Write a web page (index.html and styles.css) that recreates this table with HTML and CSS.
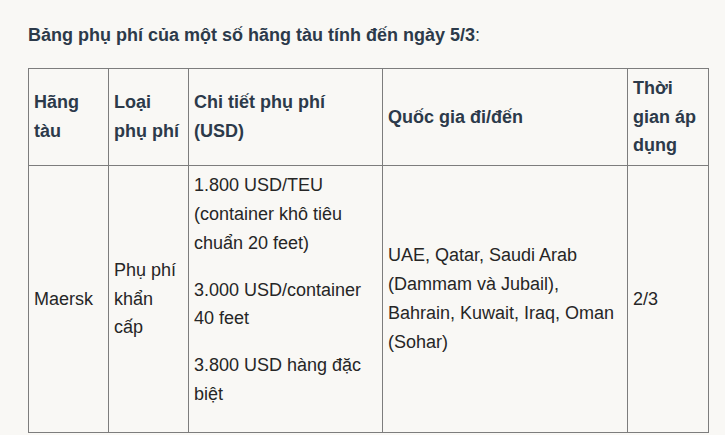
FILE: index.html
```html
<!DOCTYPE html>
<html lang="vi">
<head>
<meta charset="utf-8">
<link rel="stylesheet" href="styles.css">
</head>
<body>
<div class="article">
  <p class="caption"><strong>Bảng phụ phí của một số hãng tàu tính đến ngày 5/3</strong>:</p>
  <table class="fees">
    <colgroup>
      <col class="c1"><col class="c2"><col class="c3"><col class="c4"><col class="c5">
    </colgroup>
    <thead>
      <tr>
        <th>Hãng tàu</th>
        <th>Loại phụ phí</th>
        <th>Chi tiết phụ phí (USD)</th>
        <th>Quốc gia đi/đến</th>
        <th>Thời gian áp dụng</th>
      </tr>
    </thead>
    <tbody>
      <tr>
        <td>Maersk</td>
        <td>Phụ phí khẩn cấp</td>
        <td class="detail">
          <p>1.800 USD/TEU (container khô tiêu chuẩn 20 feet)</p>
          <p>3.000 USD/container 40 feet</p>
          <p>3.800 USD hàng đặc biệt</p>
        </td>
        <td>UAE, Qatar, Saudi Arab (Dammam và Jubail), Bahrain, Kuwait, Iraq, Oman (Sohar)</td>
        <td>2/3</td>
      </tr>
    </tbody>
  </table>
</div>
</body>
</html>
```

FILE: styles.css
```css
html, body {
  margin: 0;
  padding: 0;
  background: #f9f8f5;
}

.article {
  padding: 21px 0 0 28px;
  font-family: "Liberation Sans", Arial, sans-serif;
  font-size: 18px;
  line-height: 1.6;
  color: #262626;
}

.caption {
  margin: 0 0 18px;
  color: #2c3a4a;
}

.fees {
  border-collapse: collapse;
  table-layout: fixed;
  width: 680px;
}

.c1 { width: 80px; }
.c2 { width: 80px; }
.c3 { width: 194px; }
.c4 { width: 245px; }
.c5 { width: 81px; }

.fees th,
.fees td {
  border: 1px solid #7d7d7d;
  padding: 5px 5px;
  text-align: left;
  vertical-align: middle;
}

.fees th {
  font-weight: bold;
  color: #2c3a4a;
}

.detail p {
  margin: 0 0 18px;
}
```
